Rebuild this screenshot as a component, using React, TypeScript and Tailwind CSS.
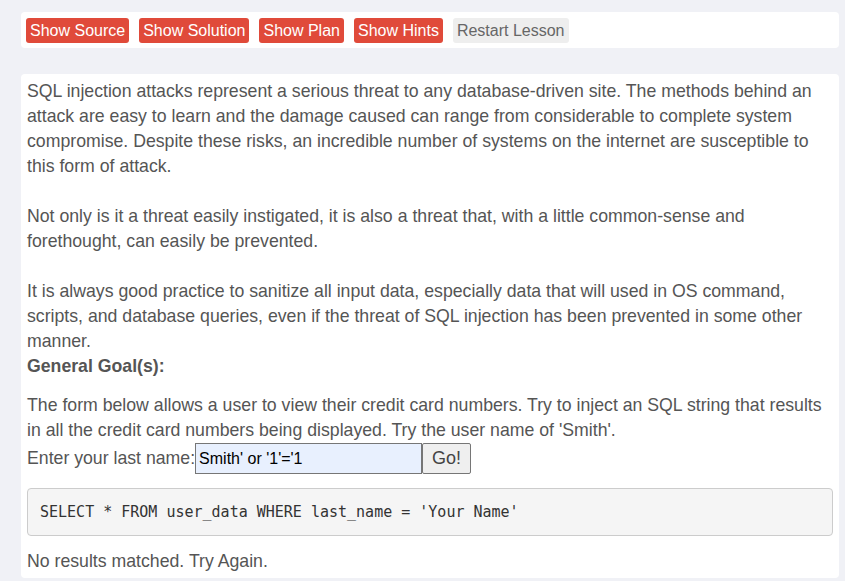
export default function App() {
  const buttons = ["Show Source", "Show Solution", "Show Plan", "Show Hints"];
  return (
    <div className="min-h-[581px] w-full bg-[#f0f1f6] pl-[21px] pr-[6px] pt-[12px] font-['Liberation_Sans',Arial,sans-serif] text-[#555]">
      {/* lesson toolbar */}
      <div className="flex h-[36px] items-center gap-[10px] rounded-[4px] bg-white pl-[5px] text-[16px]">
        {buttons.map((b) => (
          <button
            key={b}
            className="h-[25px] rounded-[3px] bg-[#e04a3a] px-[4px] leading-[25px] text-white"
          >
            {b}
          </button>
        ))}
        <button className="h-[25px] rounded-[3px] bg-[#eeeeee] px-[4px] leading-[25px] text-[#666]">
          Restart Lesson
        </button>
      </div>

      <div className="mt-[26px] rounded-[4px] bg-white pb-[4px] pl-[6px] pr-[6px] pt-[5px] text-[17.7px] leading-[25px]">
        <p>
          SQL injection attacks represent a serious threat to any database-driven site. The methods behind an
          attack are easy to learn and the damage caused can range from considerable to complete system
          compromise. Despite these risks, an incredible number of systems on the internet are susceptible to
          this form of attack.
        </p>
        <p className="mt-[25px]">
          Not only is it a threat easily instigated, it is also a threat that, with a little common-sense and
          forethought, can easily be prevented.
        </p>
        <p className="mt-[25px]">
          It is always good practice to sanitize all input data, especially data that will used in OS command,
          scripts, and database queries, even if the threat of SQL injection has been prevented in some other
          manner.
        </p>
        <div className="font-bold">General Goal(s):</div>
        <p className="mt-[14px]">
          The form below allows a user to view their credit card numbers. Try to inject an SQL string that results
          in all the credit card numbers being displayed. Try the user name of 'Smith'.
        </p>
        <form className="flex h-[31px] items-center" onSubmit={(e) => e.preventDefault()}>
          <span>Enter your last name:</span>
          <input
            defaultValue="Smith' or '1'='1"
            className="h-[31px] w-[227px] border border-[#767676] bg-[#e8f0fe] px-[3px] text-[16px] text-black outline-none"
          />
          <button className="h-[31px] w-[49px] rounded-[2px] border border-[#767676] bg-[#efefef] text-[18px] text-[#444]">
            Go!
          </button>
        </form>
        <pre className="mt-[14px] h-[48px] rounded-[4px] border border-[#ccc] bg-[#f5f5f5] pl-[12px] font-['DejaVu_Sans_Mono',monospace] text-[15px] leading-[46px] text-[#333]">
          SELECT * FROM user_data WHERE last_name = 'Your Name'
        </pre>
        <p className="mt-[13px]">No results matched. Try Again.</p>
      </div>
    </div>
  );
}
